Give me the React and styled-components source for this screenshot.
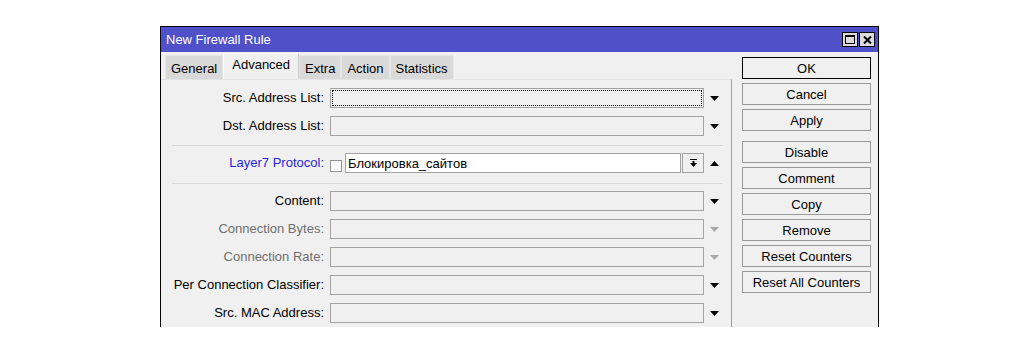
import React from 'react';
import styled, { createGlobalStyle } from 'styled-components';

const Global = createGlobalStyle`
  html, body { margin: 0; padding: 0; background: #fff; }
  body {
    font-family: "Liberation Sans", Arial, sans-serif;
    font-size: 13px;
    color: #000;
  }
`;

const Page = styled.div`
  padding: 26px 0 0 160px;
`;

const Window = styled.div`
  width: 719px;
  height: 301px;
  box-sizing: border-box;
  border: 1px solid #000;
  border-bottom: none;
  background: #f0f0f0;
  display: flex;
  flex-direction: column;
  overflow: hidden;
`;

const TitleBar = styled.div`
  height: 25px;
  flex: none;
  background: #5050c9;
  color: #fff;
  display: flex;
  align-items: center;
  justify-content: space-between;
  padding: 0 3px 0 5px;
`;

const TitleText = styled.span`
  font-size: 13px;
  line-height: 25px;
`;

const TitleButtons = styled.div`
  display: flex;
  gap: 1px;
`;

const TitleButton = styled.div`
  width: 16px;
  height: 15px;
  box-sizing: border-box;
  border: 1px solid #000;
  background: #dcdcdc;
  display: flex;
  align-items: center;
  justify-content: center;
`;

const Body = styled.div`
  flex: 1;
  display: flex;
  min-height: 0;
`;

const LeftPane = styled.div`
  width: 571px;
  flex: none;
  display: flex;
  flex-direction: column;
`;

const TabStrip = styled.div`
  height: 27px;
  flex: none;
  display: flex;
  align-items: flex-end;
  padding-left: 4px;
`;

const Tab = styled.div`
  box-sizing: border-box;
  height: ${p => (p.$active ? 26 : 24)}px;
  padding: ${p => (p.$active ? '3px 8px 0' : '5px 5px 0')};
  background: ${p => (p.$active ? '#f0f0f0' : '#d9d9d9')};
  border-left: 1px solid ${p => (p.$active ? '#fff' : '#e6e6e6')};
  border-right: 1px solid ${p => (p.$active ? '#c8c8c8' : '#e6e6e6')};
  border-top: 1px solid ${p => (p.$active ? '#fff' : '#e6e6e6')};
  font-size: 13px;
  line-height: 15px;
  white-space: nowrap;
`;

const Panel = styled.div`
  flex: 1;
  border-top: 1px solid #e3e3e3;
  border-right: 1px solid #a0a0a0;
  padding-top: 4px;
  display: flex;
  flex-direction: column;
`;

const Row = styled.div`
  display: grid;
  grid-template-columns: 163px 374px 1fr;
  column-gap: 6px;
  height: ${p => p.$h || 28}px;
  align-items: ${p => (p.$top ? 'start' : 'center')};
  padding-top: ${p => p.$pt || 0}px;
  box-sizing: border-box;
`;

const Label = styled.div`
  text-align: right;
  white-space: nowrap;
  font-size: 13px;
  line-height: 20px;
  color: ${p => (p.$tone === 'blue' ? '#1f1fe6' : p.$tone === 'gray' ? '#6f6f6f' : '#000')};
`;

const Field = styled.div`
  box-sizing: border-box;
  height: 20px;
  border: 1px solid #a3a3a3;
  background: ${p => (p.$white ? '#fff' : '#f0f0f0')};
  display: flex;
  align-items: center;
  padding-left: 2px;
  font-size: 13px;
  flex: ${p => (p.$grow ? 1 : 'none')};
  outline: ${p => (p.$focus ? '1px dotted #000' : 'none')};
  outline-offset: -3px;
`;

const ArrowCell = styled.div`
  display: flex;
  align-items: center;
  height: 20px;
`;

const Combo = styled.div`
  display: flex;
  align-items: center;
  height: 20px;
`;

const Check = styled.div`
  width: 12px;
  height: 12px;
  box-sizing: border-box;
  border: 1px solid #939393;
  background: #fbfbfb;
  align-self: flex-end;
  margin-bottom: 1px;
  margin-right: 3px;
  flex: none;
`;

const SmallButton = styled.div`
  width: 22px;
  height: 20px;
  box-sizing: border-box;
  margin-left: 1px;
  border: 1px solid #a3a3a3;
  background: #f0f0f0;
  display: flex;
  align-items: center;
  justify-content: center;
  flex: none;
`;

const Separator = styled.div`
  height: 1px;
  background: #d9d9d9;
  margin: 5px 8px 3px 11px;
  flex: none;
`;

const RightPane = styled.div`
  flex: 1;
  padding: 5px 0 0 10px;
  display: flex;
  flex-direction: column;
  gap: 4px;
`;

const Button = styled.div`
  width: 129px;
  height: 22px;
  box-sizing: border-box;
  border: 1px solid ${p => (p.$default ? '#000' : '#999')};
  background: #f0f0f0;
  display: flex;
  align-items: center;
  justify-content: center;
  font-size: 13px;
  margin-top: ${p => (p.$gapBefore ? 6 : 0)}px;
`;

const Down = ({ gray }) => (
  <svg width="9" height="5" viewBox="0 0 9 5">
    <polygon points="0,0 9,0 4.5,5" fill={gray ? '#a8a8a8' : '#000'} />
  </svg>
);

const Up = () => (
  <svg width="9" height="5" viewBox="0 0 9 5">
    <polygon points="0,5 9,5 4.5,0" fill="#000" />
  </svg>
);

const rows = [
  { label: 'Content:', tone: 'black' },
  { label: 'Connection Bytes:', tone: 'gray' },
  { label: 'Connection Rate:', tone: 'gray' },
  { label: 'Per Connection Classifier:', tone: 'black' },
  { label: 'Src. MAC Address:', tone: 'black' },
];

const buttons = ['OK', 'Cancel', 'Apply', 'Disable', 'Comment', 'Copy', 'Remove', 'Reset Counters', 'Reset All Counters'];

export default function App() {
  return (
    <>
      <Global />
      <Page>
        <Window>
          <TitleBar>
            <TitleText>New Firewall Rule</TitleText>
            <TitleButtons>
              <TitleButton>
                <svg width="10" height="9" viewBox="0 0 10 9">
                  <rect x="0.5" y="0.5" width="9" height="8" fill="none" stroke="#000" />
                  <rect x="0" y="0" width="10" height="2" fill="#000" />
                </svg>
              </TitleButton>
              <TitleButton>
                <svg width="9" height="8" viewBox="0 0 9 8">
                  <path d="M1 0.5 L8 7.5 M8 0.5 L1 7.5" stroke="#000" strokeWidth="2" />
                </svg>
              </TitleButton>
            </TitleButtons>
          </TitleBar>
          <Body>
            <LeftPane>
              <TabStrip>
                <Tab>General</Tab>
                <Tab $active>Advanced</Tab>
                <Tab>Extra</Tab>
                <Tab>Action</Tab>
                <Tab>Statistics</Tab>
              </TabStrip>
              <Panel>
                <Row>
                  <Label>Src. Address List:</Label>
                  <Field $focus />
                  <ArrowCell><Down /></ArrowCell>
                </Row>
                <Row>
                  <Label>Dst. Address List:</Label>
                  <Field />
                  <ArrowCell><Down /></ArrowCell>
                </Row>
                <Separator />
                <Row $h={29} $top $pt={4}>
                  <Label $tone="blue">Layer7 Protocol:</Label>
                  <Combo>
                    <Check />
                    <Field $white $grow>Блокировка_сайтов</Field>
                    <SmallButton>
                      <svg width="7" height="9" viewBox="0 0 7 9">
                        <rect x="0" y="0" width="7" height="1" fill="#000" />
                        <rect x="2.5" y="2" width="2" height="3" fill="#000" />
                        <polygon points="0,4 7,4 3.5,8" fill="#000" />
                      </svg>
                    </SmallButton>
                  </Combo>
                  <ArrowCell><Up /></ArrowCell>
                </Row>
                <Separator />
                {rows.map(r => (
                  <Row key={r.label}>
                    <Label $tone={r.tone}>{r.label}</Label>
                    <Field />
                    <ArrowCell><Down gray={r.tone === 'gray'} /></ArrowCell>
                  </Row>
                ))}
              </Panel>
            </LeftPane>
            <RightPane>
              {buttons.map(b => (
                <Button key={b} $default={b === 'OK'} $gapBefore={b === 'Disable'}>{b}</Button>
              ))}
            </RightPane>
          </Body>
        </Window>
      </Page>
    </>
  );
}
